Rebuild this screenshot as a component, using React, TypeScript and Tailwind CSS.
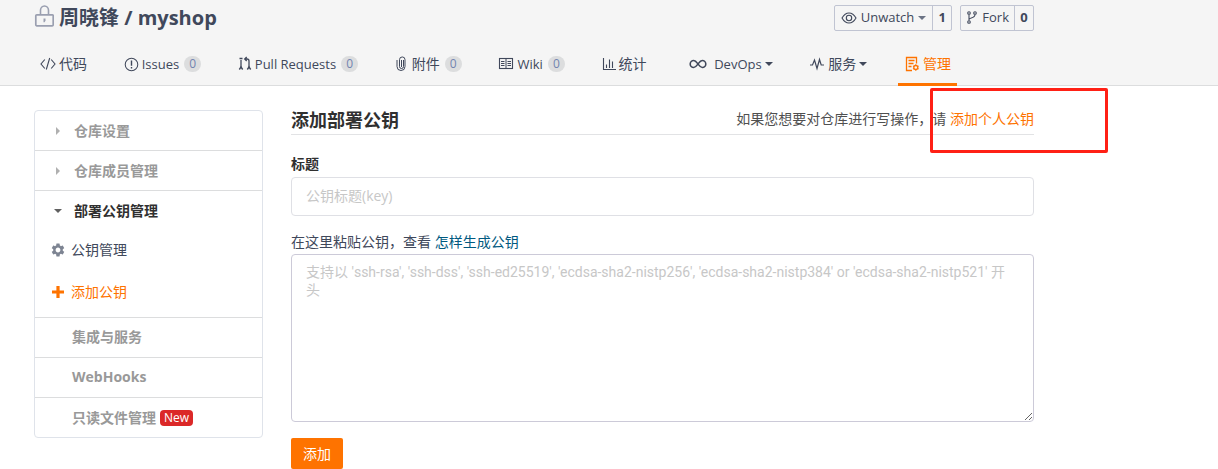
import { useState, type ReactNode } from 'react';
import { MdSettings } from 'react-icons/md';
import clsx from 'clsx';

interface IconProps {
  children: ReactNode;
  className?: string;
  viewBox?: string;
}

const Icon = ({ children, className = 'w-4 h-4', viewBox = '0 0 16 16' }: IconProps) => (
  <svg
    viewBox={viewBox}
    fill="none"
    stroke="currentColor"
    strokeWidth="1.1"
    className={clsx('shrink-0', className)}
    aria-hidden="true"
  >
    {children}
  </svg>
);

const LockIcon = () => (
  <Icon viewBox="0 0 20 22" className="w-5 h-[22px] -mt-1 text-[#9a9fb0]">
    <rect x="1.8" y="9.8" width="17.4" height="11" rx="1" strokeWidth="1.7" />
    <path d="M6.500 9.500V5.300C6.500 2.900 8.200 1 10.500 1s4 1.900 4 4.300v4.200" strokeWidth="1.6" />
    <path d="M9.500 13.500h2v2.200l-1 1.500h-1z" fill="currentColor" stroke="none" />
  </Icon>
);

const CodeIcon = () => (
  <Icon>
    <path d="M4.800 3.500L1 8l3.800 4.500M11.200 3.500L15 8l-3.800 4.500M9.700 2L6.300 13.500" />
  </Icon>
);

const IssueIcon = () => (
  <Icon className="w-[15px] h-[15px]">
    <circle cx="8" cy="8" r="6.700" />
    <path d="M8 3.800v5.400M8 10.700v1.500" strokeWidth="1.500" />
  </Icon>
);

const PullIcon = () => (
  <Icon className="w-3.5 h-4" viewBox="0 0 14 16">
    <path d="M3 4v7.500M11 11.500V5Q11 3 9 3H7M8.700 1l-2 2 2 2" strokeWidth="1.300" />
    <path d="M1.500 2.500h3M1.300 13.500L3 11l1.700 2.500M9.300 13.500L11 11l1.700 2.500" strokeWidth="1.400" />
  </Icon>
);

const ClipIcon = () => (
  <Icon className="w-3 h-4 mr-0.5" viewBox="0 0 12 16">
    <path d="M8.500 4v6.500a2 2 0 0 1-4 0V3.700a2.700 2.700 0 0 1 5.500 0v6.800a4 4 0 0 1-8 0V4M6.500 4v7" strokeWidth="1" />
  </Icon>
);

const BookIcon = () => (
  <Icon>
    <rect x="1.500" y="2.500" width="13" height="10" />
    <path d="M8 2.500v10M3 5.500h3.500M3 7.500h3.500M3 9.500h3.500M9.500 5.500H13M9.500 7.500H13M9.500 9.500H13" strokeWidth="1" />
  </Icon>
);

const ChartIcon = () => (
  <Icon className="w-3.5 h-4" viewBox="0 0 14 16">
    <path d="M1.500 2v11.500H14M4.500 12V8.500M7.500 12V3.500M10.500 12V5.500" />
  </Icon>
);

const InfinityIcon = () => (
  <Icon className="w-[18px] h-3 ml-1.5 mr-1" viewBox="0 0 18 12">
    <path
      d="M9 6C7.500 4 6.500 2.500 4.700 2.500a3.500 3.500 0 0 0 0 7C6.500 9.500 7.500 8 9 6s2.500-3.500 4.300-3.500a3.500 3.500 0 0 1 0 7C11.500 9.500 10.500 8 9 6z"
      strokeWidth="1.600"
    />
  </Icon>
);

const PulseIcon = () => (
  <Icon>
    <path d="M1 9h2.500l2-5 2.500 8.500 2.500-9 1.700 5.500H15" strokeWidth="1.200" />
  </Icon>
);

const ManageIcon = () => (
  <Icon className="w-4 h-4">
    <path d="M12.500 7.500V1.500h-10v13h5.500M4.500 4.500h6M4.500 7.500h5M4.500 10.500h3" strokeWidth="1.300" />
    <circle cx="11.800" cy="11.500" r="2" strokeWidth="1.300" />
    <path d="M11.800 8.300v1.200M11.800 13.500v1.200M9 9.900l1 .6M13.600 12.500l1 .6M9 13.100l1-.6M13.600 10.500l1-.6" />
  </Icon>
);

const EyeIcon = () => (
  <Icon>
    <path d="M1 8C3 4.500 5.300 3 8 3s5 1.500 7 5c-2 3.500-4.300 5-7 5S3 11.500 1 8z" />
    <circle cx="8" cy="8" r="2.700" />
  </Icon>
);

const ForkIcon = () => (
  <Icon className="w-3 h-4" viewBox="0 0 12 16">
    <path d="M3 4.500v6M3 9.500c0-2 6-1 6-5" />
    <circle cx="3" cy="3" r="1.300" />
    <circle cx="9" cy="3" r="1.300" />
    <circle cx="3" cy="12" r="1.300" />
  </Icon>
);

const Caret = ({ className = '' }: { className?: string }) => (
  <svg viewBox="0 0 8 4" className={clsx('w-2 h-1 shrink-0 fill-current', className)} aria-hidden="true">
    <path d="M0 0h8L4 4z" />
  </svg>
);

interface NavItem {
  label: string;
  icon: ReactNode;
  count?: number;
  caret?: boolean;
  active?: boolean;
}

const navItems: NavItem[] = [
  { label: '代码', icon: <CodeIcon /> },
  { label: 'Issues', icon: <IssueIcon />, count: 0 },
  { label: 'Pull Requests', icon: <PullIcon />, count: 0 },
  { label: '附件', icon: <ClipIcon />, count: 0 },
  { label: 'Wiki', icon: <BookIcon />, count: 0 },
  { label: '统计', icon: <ChartIcon /> },
  { label: 'DevOps', icon: <InfinityIcon />, caret: true },
  { label: '服务', icon: <PulseIcon />, caret: true },
  { label: '管理', icon: <ManageIcon />, active: true },
];

const Header = () => (
  <header className="border-b border-[#dcddde] bg-[#f5f5f5]">
    <div className="ml-[34px] max-w-[1000px]">
      <div className="flex items-start justify-between h-[43px] pt-[5px]">
        <h1 className="flex items-center gap-[5px] text-xl leading-[26px] font-bold">
          <LockIcon />
          <span>周晓锋 / myshop</span>
        </h1>
        <div className="flex gap-2">
          <div className="flex h-[26px] rounded-xs border border-[#c0c4d2] text-[13px]">
            <button className="flex items-center gap-1 px-1.5">
              <EyeIcon />
              <span>Unwatch</span>
              <Caret className="text-[#6b7384]" />
            </button>
            <a href="#watchers" className="flex w-[19px] items-center justify-center border-l border-[#c0c4d2] font-bold">1</a>
          </div>
          <div className="flex h-[26px] rounded-xs border border-[#c0c4d2] text-[13px]">
            <button className="flex items-center gap-1 px-[5px]">
              <ForkIcon />
              <span>Fork</span>
            </button>
            <a href="#forks" className="flex w-[19px] items-center justify-center border-l border-[#c0c4d2] font-bold">0</a>
          </div>
        </div>
      </div>

      <nav className="flex max-w-[923px] justify-between h-[43px] -mb-px text-sm">
        {navItems.map(item => (
          <a
            key={item.label}
            href="#nav"
            className={clsx(
              'flex items-center gap-[3px] px-1.5 pt-0.5 border-b-3 whitespace-nowrap',
              item.active ? 'border-[#fe7300] text-[#fe7300]' : 'border-transparent'
            )}
          >
            {item.icon}
            <span className={/^[A-Z]/.test(item.label) ? 'text-[13px]' : ''}>{item.label}</span>
            {item.count !== undefined && (
              <span className="ml-0.5 flex w-[17px] h-4 items-center justify-center rounded-full bg-[#dcddde] text-xs text-[#7284b0]">
                {item.count}
              </span>
            )}
            {item.caret && <Caret />}
          </a>
        ))}
      </nav>
    </div>
  </header>
);

const Sidebar = () => (
  <aside className="w-[229px] shrink-0 self-start rounded border border-[#dfe3ea] text-sm leading-5 text-[#999]">
    <a href="#settings" className="flex h-10 items-center border-b border-[#dcddde] pl-[19px] font-bold">
      <Caret className="-rotate-90 text-[#b0b0b0]" />
      <span className="pl-3">仓库设置</span>
    </a>
    <a href="#members" className="flex h-10 items-center border-b border-[#dcddde] pl-[19px] font-bold">
      <Caret className="-rotate-90 text-[#b0b0b0]" />
      <span className="pl-3">仓库成员管理</span>
    </a>
    <div className="border-b border-[#dcddde]">
      <a href="#keys" className="flex h-10 items-center pl-[19px] font-bold text-[#303030]">
        <Caret className="text-[#606060]" />
        <span className="pl-3">部署公钥管理</span>
      </a>
      <a href="#keys" className="flex h-[38px] items-center gap-[5px] pl-[15px] text-[#40485b]">
        <MdSettings className="w-4 h-4 text-[#7d8492]" />
        公钥管理
      </a>
      <a href="#new-key" className="flex h-12 items-center gap-[5px] pl-[15px] pb-0.5 text-[#fe7300]">
        <Icon className="w-4 h-4">
          <path d="M8 2v12M2 8h12" strokeWidth="3.200" />
        </Icon>
        添加公钥
      </a>
    </div>
    <a href="#services" className="flex h-10 items-center border-b border-[#dcddde] pl-[37px] pb-0.5 font-bold">集成与服务</a>
    <a href="#webhooks" className="flex h-10 items-center border-b border-[#dcddde] pl-[37px] pb-0.5 font-bold">WebHooks</a>
    <a href="#readonly" className="flex h-[39px] items-center gap-1 pl-[37px] font-bold">
      只读文件管理
      <span className="h-4 rounded bg-[#db2828] px-1 text-xs leading-4 font-normal text-white">New</span>
    </a>
  </aside>
);

const KeyForm = () => {
  const [title, setTitle] = useState('');
  const [key, setKey] = useState('');

  return (
    <form className="min-w-0 flex-1" onSubmit={e => e.preventDefault()}>
      <div className="relative flex h-[25px] items-start justify-between border-b border-[#e2e3e5]">
        <h2 className="text-lg leading-5 font-bold text-[#303030]">添加部署公钥</h2>
        <p className="text-sm leading-[18px] text-[#505050]">
          如果您想要对仓库进行写操作，请{' '}
          <a href="#personal-key" className="text-[#fe7300]">添加个人公钥</a>
        </p>
        {/* Highlight around the personal key link */}
        <div className="pointer-events-none absolute -top-[22px] -right-[74px] w-[178px] h-[65px] rounded-xs border-3 border-[#ff2015]" />
      </div>

      <label htmlFor="key-title" className="mt-[19px] block text-sm leading-5 font-bold text-[#303030]">标题</label>
      <input
        id="key-title"
        value={title}
        onChange={e => setTitle(e.target.value)}
        placeholder="公钥标题(key)"
        className="mt-[3px] block w-full h-[39px] rounded border border-[#dfe0e5] px-3.5 pb-0.5 text-sm placeholder:text-[#c7c7c7] outline-none"
      />

      <div className="mt-4 text-sm leading-5">
        <label htmlFor="key-body">在这里粘贴公钥，查看</label>{' '}
        <a href="#help" className="text-[#005980]">怎样生成公钥</a>
      </div>
      <textarea
        id="key-body"
        value={key}
        onChange={e => setKey(e.target.value)}
        placeholder="支持以 'ssh-rsa', 'ssh-dss', 'ssh-ed25519', 'ecdsa-sha2-nistp256', 'ecdsa-sha2-nistp384' or 'ecdsa-sha2-nistp521' 开头"
        className="mt-0.5 block w-full h-[168px] resize-y rounded border border-[#cccad8] pl-3.5 pr-5 py-2 font-['Roboto','Noto_Sans_CJK_SC',sans-serif] text-sm leading-[18px] placeholder:text-[#c7c7c7] outline-none"
      />

      <button type="submit" className="mt-4 block h-[31px] rounded-xs bg-[#fe7300] px-3 text-sm text-white">添加</button>
    </form>
  );
};

export default function App() {
  return (
    <div className="bg-white font-['Open_Sans','Noto_Sans_CJK_SC',sans-serif] text-[#40485b]">
      <Header />
      <main className="ml-[34px] flex max-w-[1000px] gap-7 pt-6">
        <Sidebar />
        <KeyForm />
      </main>
    </div>
  );
}
